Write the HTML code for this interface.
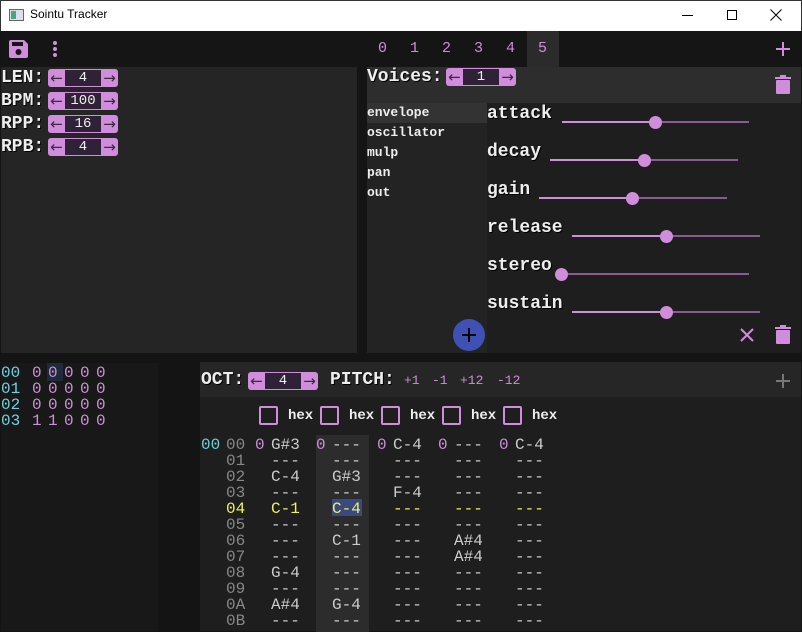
<!DOCTYPE html>
<html><head><meta charset="utf-8"><style>
*{margin:0;padding:0;box-sizing:border-box}
body{width:802px;height:632px;overflow:hidden;background:#141414;position:relative;font-family:"Liberation Mono",monospace}
.a{position:absolute}
.p{color:#cf8ddb}
.lbl{font-family:"Liberation Mono",monospace;font-size:18px;color:#eee;font-weight:bold;text-shadow:1px 1px 0 #000}
.spin{position:absolute;width:70px;height:18px;background:#cf8ddb;border-radius:3px}
.spin .in{position:absolute;left:17px;top:1px;width:36px;height:16px;background:#2f2136;color:#eee;font-size:14px;text-align:center;line-height:16px}
.spin .l,.spin .r{position:absolute;top:0;width:17px;height:18px;color:#3a2a40;font-size:15px;line-height:18px;text-align:center;font-family:"DejaVu Sans",sans-serif}
.spin .l{left:0}.spin .r{right:0}
.param{font-size:18px;color:#eee;font-weight:bold;text-shadow:1px 1px 0 #000}
.trk{position:absolute;height:2px;background:#8a5a94}
.fill{position:absolute;height:2px;background:#cf8ddb}
.knob{position:absolute;width:13px;height:13px;border-radius:50%;background:#cf8ddb}
.cb{position:absolute;width:19px;height:19px;border:2px solid #cf8ddb;border-radius:2px}
.hx{position:absolute;font-size:14px;color:#eee;font-weight:bold}
pre{position:absolute;font-family:"Liberation Mono",monospace;font-size:16px;line-height:16px}
.tab{position:absolute;top:40px;font-size:15px;color:#cf8ddb}
</style></head><body>
<div class="a" style="left:0;top:0;width:802px;height:31px;background:#fff;border:1px solid #333;border-bottom:none"></div>
<div class="a" style="left:9px;top:9px;width:15px;height:12px;border:1px solid #666;background:#dde"></div>
<div class="a" style="left:11px;top:11px;width:5px;height:8px;background:#4a7"></div>
<div class="a" style="left:30px;top:7px;font-family:'Liberation Sans',sans-serif;font-size:12px;color:#000">Sointu Tracker</div>
<div class="a" style="left:682px;top:15px;width:11px;height:1px;background:#000"></div>
<div class="a" style="left:727px;top:10px;width:10px;height:10px;border:1px solid #000"></div>
<svg class="a" style="left:770px;top:9px" width="12" height="12"><path d="M0.5 0.5L11.5 11.5M11.5 0.5L0.5 11.5" stroke="#000" stroke-width="1"/></svg>
<div class="a" style="left:1px;top:31px;width:800px;height:36px;background:#151515"></div>
<svg class="a" style="left:9px;top:40px" width="20" height="18"><path d="M0 2q0-2 2-2h13l4 4v12q0 2-2 2H2q-2 0-2-2z" fill="#cf8ddb"/><rect x="3" y="2" width="11" height="4" fill="#151515"/><circle cx="9.5" cy="12" r="3" fill="#151515"/></svg>
<div class="a" style="left:53px;top:41px;width:4px;height:4px;border-radius:2px;background:#cf8ddb;box-shadow:0 6px 0 #cf8ddb,0 12px 0 #cf8ddb"></div>
<div class="a" style="left:527px;top:31px;width:32px;height:36px;background:#2b2b2b"></div>
<div class="tab" style="left:378px">0</div>
<div class="tab" style="left:410px">1</div>
<div class="tab" style="left:442px">2</div>
<div class="tab" style="left:474px">3</div>
<div class="tab" style="left:506px">4</div>
<div class="tab" style="left:538px">5</div>
<div class="a" style="left:776px;top:48px;width:14px;height:2px;background:#cf8ddb"></div>
<div class="a" style="left:782px;top:42px;width:2px;height:14px;background:#cf8ddb"></div>
<div class="a" style="left:1px;top:67px;width:356px;height:286px;background:#252525"></div>
<div class="a lbl" style="left:1px;top:68px">LEN:</div>
<div class="spin" style="left:48px;top:69px"><span class="l">←</span><span class="in">4</span><span class="r">→</span></div>
<div class="a lbl" style="left:1px;top:91px">BPM:</div>
<div class="spin" style="left:48px;top:92px"><span class="l">←</span><span class="in">100</span><span class="r">→</span></div>
<div class="a lbl" style="left:1px;top:114px">RPP:</div>
<div class="spin" style="left:48px;top:115px"><span class="l">←</span><span class="in">16</span><span class="r">→</span></div>
<div class="a lbl" style="left:1px;top:137px">RPB:</div>
<div class="spin" style="left:48px;top:138px"><span class="l">←</span><span class="in">4</span><span class="r">→</span></div>
<div class="a" style="left:367px;top:67px;width:434px;height:36px;background:#2d2d2d"></div>
<div class="a lbl" style="left:367px;top:67px">Voices:</div>
<div class="spin" style="left:446px;top:68px"><span class="l">←</span><span class="in">1</span><span class="r">→</span></div>
<svg class="a" style="left:775px;top:75px" width="16" height="20"><rect x="0" y="2" width="16" height="2" fill="#cf8ddb"/><rect x="5" y="0" width="6" height="2" fill="#cf8ddb"/><rect x="1" y="5" width="14" height="14" rx="1" fill="#cf8ddb"/></svg>
<div class="a" style="left:367px;top:103px;width:120px;height:250px;background:#232323"></div>
<div class="a" style="left:367px;top:103px;width:120px;height:20px;background:#333"></div>
<div class="a" style="left:487px;top:103px;width:314px;height:250px;background:#1e1e1e"></div>
<div class="a" style="left:367px;top:103px;font-size:13px;line-height:20px;color:#eee;font-weight:bold">envelope<br>oscillator<br>mulp<br>pan<br>out</div>

<div class="a param" style="left:487px;top:104px">attack</div>
<div class="trk" style="left:562px;top:121px;width:187px"></div><div class="fill" style="left:562px;top:121px;width:93px"></div><div class="knob" style="left:649px;top:116px"></div>
<div class="a param" style="left:487px;top:142px">decay</div>
<div class="trk" style="left:550px;top:159px;width:188px"></div><div class="fill" style="left:550px;top:159px;width:94px"></div><div class="knob" style="left:638px;top:154px"></div>
<div class="a param" style="left:487px;top:180px">gain</div>
<div class="trk" style="left:539px;top:197px;width:188px"></div><div class="fill" style="left:539px;top:197px;width:93px"></div><div class="knob" style="left:626px;top:192px"></div>
<div class="a param" style="left:487px;top:218px">release</div>
<div class="trk" style="left:572px;top:235px;width:188px"></div><div class="fill" style="left:572px;top:235px;width:94px"></div><div class="knob" style="left:660px;top:230px"></div>
<div class="a param" style="left:487px;top:256px">stereo</div>
<div class="trk" style="left:562px;top:273px;width:187px"></div><div class="knob" style="left:555px;top:268px"></div>
<div class="a param" style="left:487px;top:294px">sustain</div>
<div class="trk" style="left:572px;top:311px;width:188px"></div><div class="fill" style="left:572px;top:311px;width:94px"></div><div class="knob" style="left:660px;top:306px"></div>

<div class="a" style="left:453px;top:319px;width:32px;height:32px;border-radius:50%;background:#3f51b5"></div>
<div class="a" style="left:462px;top:334px;width:14px;height:2px;background:#000"></div>
<div class="a" style="left:468px;top:328px;width:2px;height:14px;background:#000"></div>
<svg class="a" style="left:739px;top:327px" width="16" height="16"><path d="M2 2L14 14M14 2L2 14" stroke="#cf8ddb" stroke-width="2"/></svg>
<svg class="a" style="left:775px;top:325px" width="16" height="20"><rect x="0" y="2" width="16" height="2" fill="#cf8ddb"/><rect x="5" y="0" width="6" height="2" fill="#cf8ddb"/><rect x="1" y="5" width="14" height="14" rx="1" fill="#cf8ddb"/></svg>

<div class="a" style="left:1px;top:363px;width:157px;height:268px;background:#181818"></div>
<div class="a" style="left:47px;top:363px;width:16px;height:18px;background:#1f2a3a"></div>
<pre style="left:1px;top:365px;color:#6fd0e0">00
01
02
03</pre>
<pre style="left:32px;top:365px;color:#cf8ddb;letter-spacing:6.4px">00000
00000
00000
11000</pre>

<div class="a" style="left:200px;top:362px;width:601px;height:35px;background:#262626"></div>
<div class="a" style="left:200px;top:397px;width:601px;height:234px;background:#1e1e1e"></div>
<div class="a lbl" style="left:201px;top:370px">OCT:</div>
<div class="spin" style="left:248px;top:372px"><span class="l">←</span><span class="in">4</span><span class="r">→</span></div>
<div class="a lbl" style="left:330px;top:370px">PITCH:</div>
<div class="a p" style="left:404px;top:373px;font-size:13px">+1</div>
<div class="a p" style="left:432px;top:373px;font-size:13px">-1</div>
<div class="a p" style="left:460px;top:373px;font-size:13px">+12</div>
<div class="a p" style="left:497px;top:373px;font-size:13px">-12</div>
<div class="a" style="left:776px;top:380px;width:14px;height:2px;background:#777"></div>
<div class="a" style="left:782px;top:374px;width:2px;height:14px;background:#777"></div>

<div class="cb" style="left:259px;top:406px"></div><div class="hx" style="left:288px;top:408px">hex</div>
<div class="cb" style="left:320px;top:406px"></div><div class="hx" style="left:349px;top:408px">hex</div>
<div class="cb" style="left:381px;top:406px"></div><div class="hx" style="left:410px;top:408px">hex</div>
<div class="cb" style="left:442px;top:406px"></div><div class="hx" style="left:471px;top:408px">hex</div>
<div class="cb" style="left:503px;top:406px"></div><div class="hx" style="left:532px;top:408px">hex</div>

<div class="a" style="left:316px;top:435px;width:53px;height:197px;background:#2c2c2c"></div>
<div class="a" style="left:332px;top:499px;width:30px;height:17px;background:#3a4a80"></div>
<pre style="left:201px;top:437px;color:#6fd0e0">00</pre>
<pre style="left:226px;top:437px;color:#888">00
01
02
03
<span style="color:#f0f060">04</span>
05
06
07
08
09
0A
0B</pre>
<pre style="left:255px;top:437px;color:#cf8ddb">0</pre>
<pre style="left:316px;top:437px;color:#cf8ddb">0</pre>
<pre style="left:377px;top:437px;color:#cf8ddb">0</pre>
<pre style="left:438px;top:437px;color:#cf8ddb">0</pre>
<pre style="left:499px;top:437px;color:#cf8ddb">0</pre>
<pre style="left:271px;top:437px;color:#ccc">G#3
---
C-4
---
<span style="color:#f0f060">C-1</span>
---
---
---
G-4
---
A#4
---</pre>
<pre style="left:332px;top:437px;color:#ccc">---
---
G#3
---
<span style="color:#f0f060">C-4</span>
---
C-1
---
---
---
G-4
---</pre>
<pre style="left:393px;top:437px;color:#ccc">C-4
---
---
F-4
<span style="color:#f0f060">---</span>
---
---
---
---
---
---
---</pre>
<pre style="left:454px;top:437px;color:#ccc">---
---
---
---
<span style="color:#f0f060">---</span>
---
A#4
A#4
---
---
---
---</pre>
<pre style="left:515px;top:437px;color:#ccc">C-4
---
---
---
<span style="color:#f0f060">---</span>
---
---
---
---
---
---
---</pre>
</body></html>
